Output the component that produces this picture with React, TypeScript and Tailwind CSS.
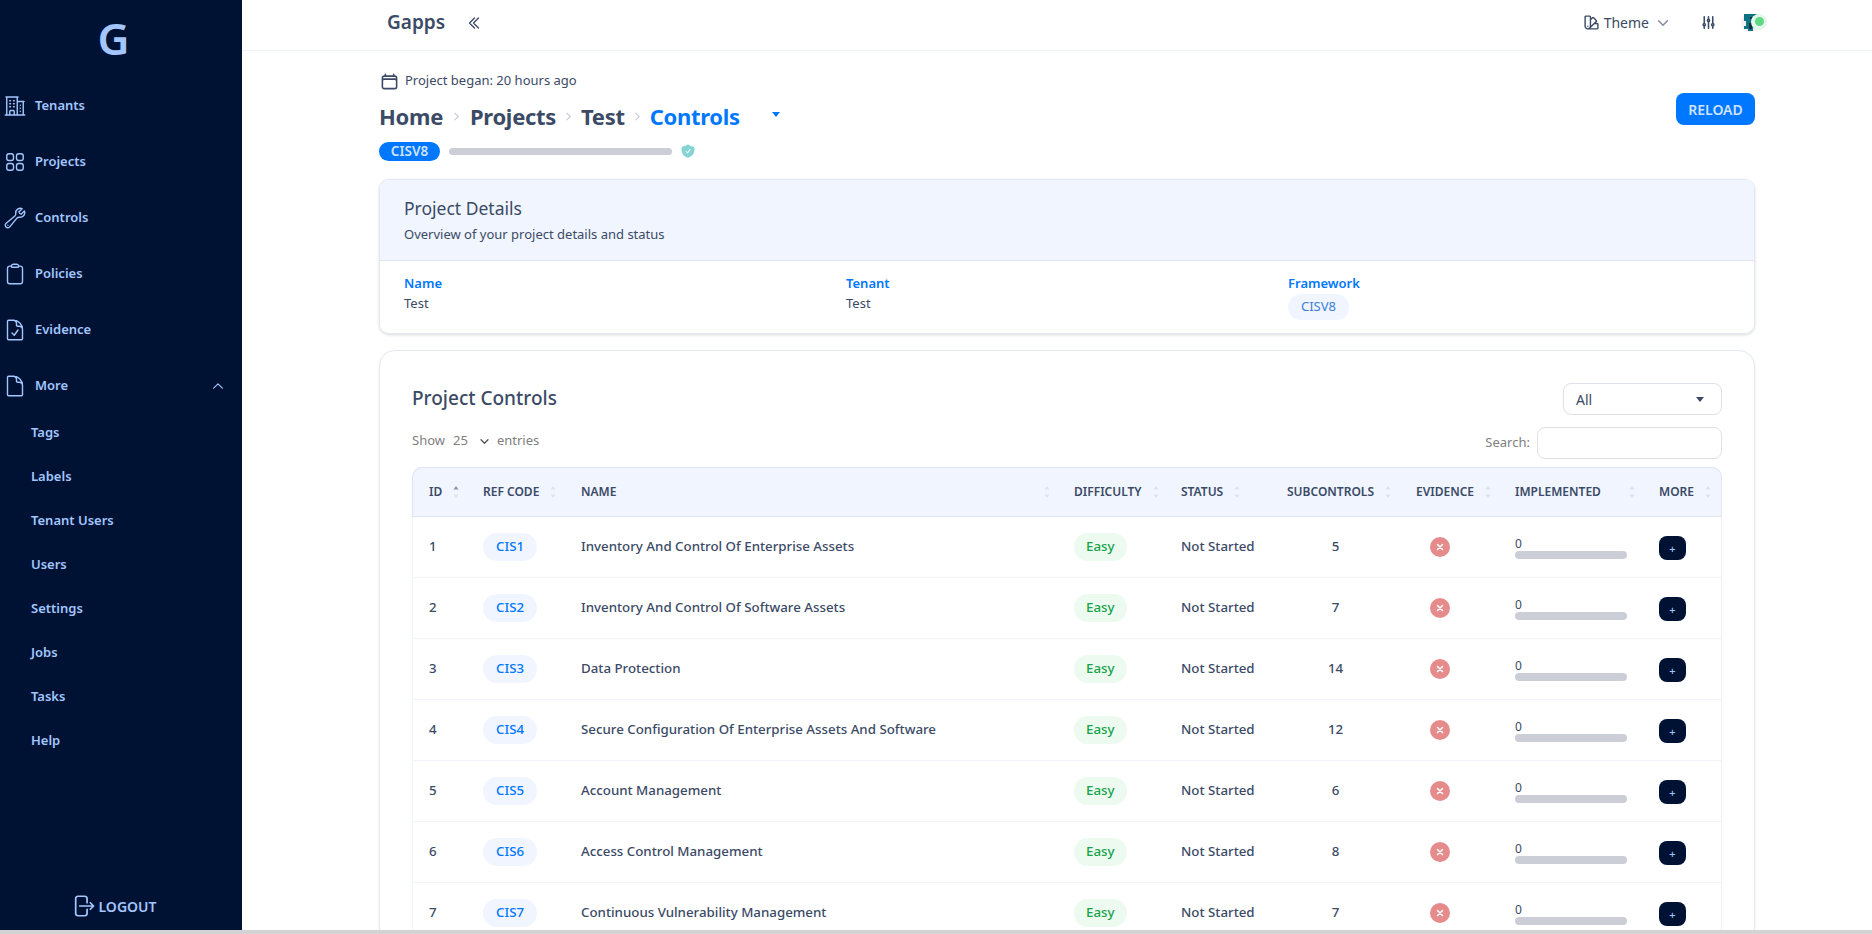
import {
  HiOutlineAdjustmentsVertical,
  HiOutlineArrowRightOnRectangle,
  HiOutlineBuildingOffice2,
  HiOutlineCalendar,
  HiOutlineChevronDoubleLeft,
  HiOutlineChevronDown,
  HiOutlineChevronRight,
  HiOutlineChevronUp,
  HiOutlineClipboard,
  HiOutlineDocument,
  HiOutlineDocumentCheck,
  HiOutlineSquares2X2,
  HiOutlineSwatch,
  HiOutlineWrench,
  HiShieldCheck,
} from 'react-icons/hi2'

const mainNav = [
  { label: 'Tenants', icon: HiOutlineBuildingOffice2 },
  { label: 'Projects', icon: HiOutlineSquares2X2 },
  { label: 'Controls', icon: HiOutlineWrench },
  { label: 'Policies', icon: HiOutlineClipboard },
  { label: 'Evidence', icon: HiOutlineDocumentCheck },
]

const subNav = ['Tags', 'Labels', 'Tenant Users', 'Users', 'Settings', 'Jobs', 'Tasks', 'Help']

const controls = [
  { id: 1, code: 'CIS1', name: 'Inventory And Control Of Enterprise Assets', subcontrols: 5 },
  { id: 2, code: 'CIS2', name: 'Inventory And Control Of Software Assets', subcontrols: 7 },
  { id: 3, code: 'CIS3', name: 'Data Protection', subcontrols: 14 },
  { id: 4, code: 'CIS4', name: 'Secure Configuration Of Enterprise Assets And Software', subcontrols: 12 },
  { id: 5, code: 'CIS5', name: 'Account Management', subcontrols: 6 },
  { id: 6, code: 'CIS6', name: 'Access Control Management', subcontrols: 8 },
  { id: 7, code: 'CIS7', name: 'Continuous Vulnerability Management', subcontrols: 7 },
]

const columns = [
  { label: 'ID', width: 'w-[55px]', active: true },
  { label: 'REF CODE', width: 'w-[98px]' },
  { label: 'NAME', width: 'w-[493px]' },
  { label: 'DIFFICULTY', width: 'w-[107px]' },
  { label: 'STATUS', width: 'w-[106px]' },
  { label: 'SUBCONTROLS', width: 'w-[129px]' },
  { label: 'EVIDENCE', width: 'w-[99px]' },
  { label: 'IMPLEMENTED', width: 'w-[144px]' },
  { label: 'MORE', width: 'w-[79px]' },
]

const SortArrows = ({ active }: { active?: boolean }) => (
  <svg width="8" height="14" viewBox="0 0 8 14" className="shrink-0">
    <path d="M4 1 L6.5 4.5 H1.5 Z" fill={active ? '#8a94a8' : '#dde3ee'} />
    <path d="M4 13 L6.5 9.5 H1.5 Z" fill="#dde3ee" />
  </svg>
)

const Sidebar = () => (
  <aside className="w-[242px] shrink-0 bg-[#001233] text-[#a3c6ff] flex flex-col h-full">
    <div className="h-[76px] flex items-center justify-center pr-[15px] text-[44px] font-semibold leading-none">G</div>
    <nav className="flex flex-col pt-[2px]">
      {mainNav.map(({ label, icon: Icon }) => (
        <div key={label} className="h-[56px] flex items-center text-[13px] font-semibold">
          <Icon className="w-[24px] h-[24px] ml-[3px] mr-[8px] shrink-0" strokeWidth={1.4} />
          {label}
        </div>
      ))}
      <div className="h-[56px] flex items-center text-[13px] font-semibold">
        <HiOutlineDocument className="w-[24px] h-[24px] ml-[3px] mr-[8px] shrink-0" strokeWidth={1.4} />
        <span className="flex-1">More</span>
        <HiOutlineChevronUp className="w-[14px] h-[14px] mr-[17px]" strokeWidth={2} />
      </div>
      <div className="flex flex-col mt-[-3px]">
        {subNav.map((item) => (
          <div key={item} className="h-[44px] pl-[31px] flex items-center text-[13px] font-semibold">
            {item}
          </div>
        ))}
      </div>
    </nav>
    <div className="mt-auto mb-[11px] pr-[16px] flex items-center justify-center gap-[3px] text-[14px] font-semibold">
      <HiOutlineArrowRightOnRectangle className="w-[26px] h-[26px]" strokeWidth={1.6} />
      LOGOUT
    </div>
  </aside>
)

const Topbar = () => (
  <header className="h-[51px] shrink-0 border-b border-[#eef4fb] flex items-center pl-[145px] pr-[106px] pb-[5px] text-[#3b4a66]">
    <span className="text-[19px] font-semibold">Gapps</span>
    <HiOutlineChevronDoubleLeft className="w-[16px] h-[16px] ml-[21px]" strokeWidth={2} />
    <div className="ml-auto flex items-center">
      <HiOutlineSwatch className="w-[17px] h-[17px] mr-[4px]" strokeWidth={2} />
      <span className="text-[14px]">Theme</span>
      <HiOutlineChevronDown className="w-[14px] h-[14px] ml-[7px] text-[#7f8a9e]" strokeWidth={2.5} />
      <HiOutlineAdjustmentsVertical className="w-[17px] h-[17px] ml-[30px]" strokeWidth={2.2} />
      <div className="relative ml-[24px] w-[25px] h-[20px]">
        <span className="absolute left-0 top-0 w-[19px] h-[19px] rounded-full bg-[#f7eeee]" />
        <svg width="16" height="18" viewBox="0 0 16 18" className="absolute left-[2px] top-[1px]">
          <path d="M1 0 H14 V6 H11 V9 H12 V14 H10 V17 H5 V15 H1 V12 H3 V7 H1 Z" fill="#0f7184" />
          <path d="M6 9 H9 V15 H6 Z" fill="#12313c" />
          <path d="M7 3 H9 V5 H7 Z" fill="#0b2a33" />
        </svg>
        <span className="absolute right-[-1px] top-[1px] w-[16px] h-[16px] rounded-full bg-[#e3f8ea] flex items-center justify-center">
          <span className="w-[9px] h-[9px] rounded-full bg-[#5fd983]" />
        </span>
      </div>
    </div>
  </header>
)

const PageHead = () => (
  <div className="flex items-start justify-between text-[#3b4a66]">
    <div>
      <div className="flex items-center gap-[6px] text-[13px] h-[22px] pl-[1px]">
        <HiOutlineCalendar className="w-[19px] h-[19px]" strokeWidth={2} />
        Project began: 20 hours ago
      </div>
      <div className="flex items-center text-[22px] font-bold tracking-[-0.3px] h-[38px] mt-[5px]">
        <span>Home</span>
        <HiOutlineChevronRight className="w-[11px] h-[11px] mx-[8px] text-[#c9ced8]" strokeWidth={2.5} />
        <span>Projects</span>
        <HiOutlineChevronRight className="w-[11px] h-[11px] mx-[7px] text-[#c9ced8]" strokeWidth={2.5} />
        <span>Test</span>
        <HiOutlineChevronRight className="w-[11px] h-[11px] mx-[7px] text-[#c9ced8]" strokeWidth={2.5} />
        <span className="text-[#0077ff]">Controls</span>
        <svg width="8" height="5" viewBox="0 0 8 5" className="ml-[32px] mb-[4px]">
          <path d="M0 0 H8 L4 5 Z" fill="#0077ff" />
        </svg>
      </div>
      <div className="flex items-center h-[20px] mt-[6px]">
        <span className="w-[61px] h-[19px] rounded-full bg-[#0077ff] text-[#cfe3ff] text-[13.5px] font-semibold flex items-center justify-center">
          CISV8
        </span>
        <span className="ml-[9px] w-[223px] h-[7px] rounded-full bg-[#cbced7]" />
        <HiShieldCheck className="ml-[8px] w-[16px] h-[16px] text-[#86d3d3]" />
      </div>
    </div>
    <button className="mt-[23px] w-[79px] h-[32px] rounded-[8px] bg-[#0077ff] text-[#cfe3ff] text-[14px] font-semibold">
      RELOAD
    </button>
  </div>
)

const ProjectDetails = () => (
  <section className="mt-[18px] rounded-[10px] border border-[#e3e8f2] shadow-[0_1px_3px_rgba(0,0,0,0.15)] overflow-hidden text-[#3b4a66]">
    <div className="h-[81px] bg-[#f0f5ff] border-b border-[#dfe5f0] pl-[24px] pb-[2px] flex flex-col justify-center">
      <div className="text-[17.5px] leading-[26px]">Project Details</div>
      <div className="text-[13px] leading-[20px] mt-[3px]">Overview of your project details and status</div>
    </div>
    <div className="h-[72px] grid grid-cols-3 pl-[24px] pr-[24px] pt-[12px]">
      <div>
        <div className="text-[13px] leading-[20px] font-semibold text-[#0077ff]">Name</div>
        <div className="text-[13px] leading-[20px]">Test</div>
      </div>
      <div>
        <div className="text-[13px] leading-[20px] font-semibold text-[#0077ff]">Tenant</div>
        <div className="text-[13px] leading-[20px]">Test</div>
      </div>
      <div>
        <div className="text-[13px] leading-[20px] font-semibold text-[#0077ff]">Framework</div>
        <span className="inline-flex items-center justify-center w-[61px] h-[26px] rounded-full bg-[#f0f5ff] text-[13px] text-[#3d7fd6]">
          CISV8
        </span>
      </div>
    </div>
  </section>
)

const ControlsTable = () => (
  <table className="w-[1310px] table-fixed border-separate border-spacing-0 text-[13.3px] text-[#3b4a66]">
    <thead>
      <tr className="h-[50px] bg-[#f0f5ff]">
        {columns.map((col, i) => (
          <th
            key={col.label}
            className={`${col.width} border-t border-b border-[#dfe5f0] font-semibold text-[12px] text-left pl-[16px] ${
              i === 0 ? 'rounded-tl-[10px] border-l' : ''
            } ${i === columns.length - 1 ? 'rounded-tr-[10px] border-r' : ''}`}
          >
            <div className={`flex items-center ${col.label === 'NAME' || col.label === 'IMPLEMENTED' ? 'justify-between pr-[7px]' : 'gap-[10px]'}`}>
              {col.label}
              <SortArrows active={col.active} />
            </div>
          </th>
        ))}
      </tr>
    </thead>
    <tbody>
      {controls.map((row) => (
        <tr key={row.id} className="h-[61px] font-medium">
          <td className="pl-[16px] border-b border-l border-[#f0f3fa]">{row.id}</td>
          <td className="pl-[16px] border-b border-[#f0f3fa]">
            <span className="inline-flex items-center h-[28px] px-[13px] rounded-full bg-[#f0f5ff] text-[#0077ff]">
              {row.code}
            </span>
          </td>
          <td className="pl-[16px] border-b border-[#f0f3fa]">{row.name}</td>
          <td className="pl-[16px] border-b border-[#f0f3fa]">
            <span className="inline-flex items-center h-[28px] px-[12px] rounded-full bg-[#ecfaf0] text-[#16a34a]">
              Easy
            </span>
          </td>
          <td className="pl-[16px] border-b border-[#f0f3fa]">Not Started</td>
          <td className="pl-[16px] border-b border-[#f0f3fa]">
            <div className="w-[64px] text-center pl-[33px]">{row.subcontrols}</div>
          </td>
          <td className="pl-[16px] border-b border-[#f0f3fa]">
            <div className="ml-[14px] w-[20px] h-[20px] rounded-full bg-[#e58b8b] flex items-center justify-center">
              <svg width="8" height="8" viewBox="0 0 8 8">
                <path d="M1.5 1.5 L6.5 6.5 M6.5 1.5 L1.5 6.5" stroke="#fff" strokeWidth="1.5" strokeLinecap="round" />
              </svg>
            </div>
          </td>
          <td className="pl-[16px] border-b border-[#f0f3fa]">
            <div className="text-[12px] leading-[12px] font-normal mt-[2px]">0</div>
            <div className="w-[112px] h-[8px] rounded-full bg-[#cbced7] mt-[1px]" />
          </td>
          <td className="pl-[16px] border-b border-r border-[#f0f3fa]">
            <div className="w-[27px] h-[24px] mt-[2px] rounded-[8px] bg-[#001233] flex items-center justify-center text-[#a3c6ff] text-[11px] leading-none">
              +
            </div>
          </td>
        </tr>
      ))}
    </tbody>
  </table>
)

const ProjectControls = () => (
  <section className="mt-[16px] rounded-t-[16px] border border-[#e3e8f2] px-[32px] pt-[32px] pb-[40px] shadow-[0_1px_3px_rgba(0,0,0,0.08)] text-[#3b4a66]">
    <div className="flex items-center justify-between h-[32px]">
      <h2 className="text-[19px] font-medium mb-[2px]">Project Controls</h2>
      <div className="w-[159px] h-[32px] rounded-[8px] border border-[#dfe1e8] pl-[12px] pr-[17px] flex items-center justify-between text-[14px]">
        All
        <svg width="8" height="5" viewBox="0 0 8 5">
          <path d="M0 0 H8 L4 5 Z" fill="#3b4a66" />
        </svg>
      </div>
    </div>
    <div className="flex items-center justify-between h-[32px] mt-[12px] mb-[8px] text-[13px] text-[#808080]">
      <div className="flex items-center mb-[4px]">
        Show
        <span className="ml-[8px]">25</span>
        <HiOutlineChevronDown className="w-[11px] h-[11px] ml-[11px] text-[#555]" strokeWidth={3} />
        <span className="ml-[7px]">entries</span>
      </div>
      <div className="flex items-center gap-[7px]">
        Search:
        <div className="w-[185px] h-[32px] rounded-[8px] border border-[#dfe1e8]" />
      </div>
    </div>
    <ControlsTable />
  </section>
)

export default function App() {
  return (
    <div className="w-[1872px] h-[934px] overflow-hidden flex flex-col bg-white font-['Noto_Sans',sans-serif]">
      <div className="flex flex-1 min-h-0">
        <Sidebar />
        <div className="flex-1 min-w-0 flex flex-col overflow-hidden">
          <Topbar />
          <main className="flex-1 pl-[137px] pr-[117px] pt-[19px]">
            <PageHead />
            <ProjectDetails />
            <ProjectControls />
          </main>
        </div>
      </div>
      <div className="h-[4px] shrink-0 bg-[#d3d3d3]" />
    </div>
  )
}
